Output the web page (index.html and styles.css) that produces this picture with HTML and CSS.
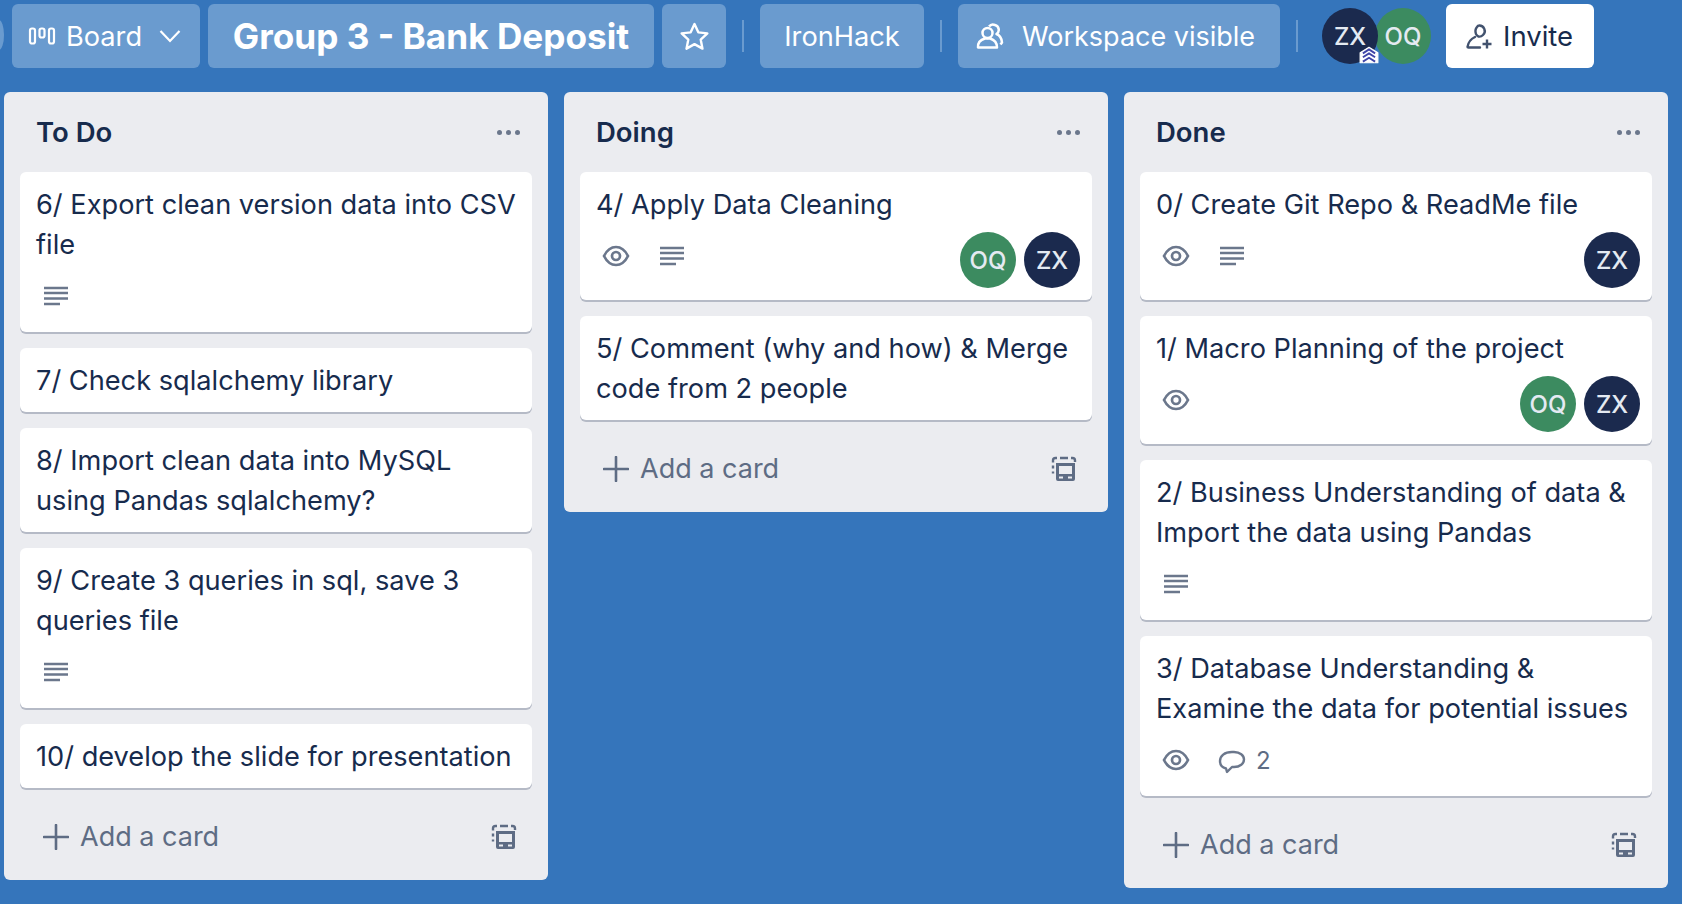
FILE: index.html
```html
<!DOCTYPE html>
<html lang="en">
<head>
<meta charset="utf-8">
<title>Group 3 - Bank Deposit</title>
<link rel="stylesheet" href="styles.css">
</head>
<body>
<svg class="sprites" width="0" height="0" aria-hidden="true">
  <defs>
    <symbol id="i-desc" viewBox="0 0 26 20"><path d="M1 2h24M1 7h24M1 12.500h24M1 18h16" fill="none" stroke="currentColor" stroke-width="2.400"/></symbol>
    <symbol id="i-eye" viewBox="0 0 28 22"><path d="M2 11C5 5 9 2 14 2s9 3 12 9c-3 6-7 9-12 9S5 17 2 11z" fill="none" stroke="currentColor" stroke-width="2.700"/><circle cx="14" cy="11" r="4" fill="none" stroke="currentColor" stroke-width="2.700"/></symbol>
    <symbol id="i-tpl" viewBox="0 0 26 26"><path d="M2 6.500V4.500Q2 2 4.500 2H6M9 2h8M20 2h1.500Q24 2 24 4.500V6M2 9.500v3M2 15.500v2" fill="none" stroke="currentColor" stroke-width="2.400"/><path d="M5 7h19v16q0 2-2 2H7q-2 0-2-2zM8 10v8h13v-8zM8 20.500v2h4v-2zM17 20.500v2h4v-2z" fill="currentColor" fill-rule="evenodd"/></symbol>
    <symbol id="i-plus" viewBox="0 0 26 26"><path d="M13 1v24M1 13h24" fill="none" stroke="currentColor" stroke-width="2.600" stroke-linecap="round"/></symbol>
  </defs>
</svg>
<header class="topbar">
  <span class="edge"></span>
  <div class="btn board-btn">
    <svg class="ico-board" viewBox="0 0 28 18"><rect x="2" y="1.500" width="5" height="15" rx="2" fill="none" stroke="#fff" stroke-width="2.200"/><rect x="11.500" y="1.500" width="5" height="9" rx="2" fill="none" stroke="#fff" stroke-width="2.200"/><rect x="21" y="1.500" width="5" height="15" rx="2" fill="none" stroke="#fff" stroke-width="2.200"/></svg>
    <span>Board</span>
    <svg class="ico-chev" viewBox="0 0 22 14"><path d="M1.500 2l9.500 10 9.500-10" fill="none" stroke="#fff" stroke-width="2.200"/></svg>
  </div>
  <h1 class="btn title">Group 3 - Bank Deposit</h1>
  <div class="btn star"><svg viewBox="0 0 26 26" width="31" height="31"><path d="M13 2.500l3.200 7 7.600.9-5.600 5.200 1.500 7.600L13 19.400l-6.700 3.800 1.500-7.600-5.600-5.200 7.600-.9z" fill="none" stroke="#fff" stroke-width="2" stroke-linejoin="round"/></svg></div>
  <span class="sep"></span>
  <div class="btn org">IronHack</div>
  <span class="sep"></span>
  <div class="btn vis">
    <svg viewBox="0 0 28 26" width="28" height="26"><circle cx="11.500" cy="10" r="5" fill="none" stroke="#fff" stroke-width="2.500"/><path d="M2 24.500q-.5-7 7-9h5q7 2 7 9z" fill="none" stroke="#fff" stroke-width="2.500" stroke-linejoin="round"/><path d="M13 3.500a5 5 0 0 1 6-1.500 5 5 0 0 1 1.500 9q5 2 5.500 8.500l-1.500 2" fill="none" stroke="#fff" stroke-width="2.500" stroke-linejoin="round"/></svg>
    <span>Workspace visible</span>
  </div>
  <span class="sep"></span>
  <div class="members">
    <span class="avatar top navy">ZX<svg class="chevrons" viewBox="0 0 18 16"><path d="M1 6L9 1l8 5v9H1z" fill="#fff" stroke="#fff" stroke-linejoin="round"/><path d="M3.500 6.500L9 3l5.500 3.500M3.500 10L9 6.500l5.500 3.500M3.500 14L9 10.500l5.500 3.500" fill="none" stroke="#3f45a8" stroke-width="1.700"/></svg></span>
    <span class="avatar top green">OQ</span>
  </div>
  <div class="invite">
    <svg viewBox="0 0 28 26" width="28" height="26"><path d="M14 2.500a5.500 5.500 0 0 1 4 9.500q-2 2-4.500 1.500-1.500-.5-2.500-2.500-1.500-4 1-7 1-1.500 2-1.500z" fill="none" stroke="#42526e" stroke-width="2.400"/><path d="M10 14Q3.500 17 2.500 24q0 .5 1 .5H15" fill="none" stroke="#42526e" stroke-width="2.400" stroke-linecap="round"/><path d="M22 16.500v9M17.500 21h9" fill="none" stroke="#42526e" stroke-width="2.400"/></svg>
    <span>Invite</span>
  </div>
</header>
<main class="lists">
  <section class="list">
    <div class="list-head"><h2>To Do</h2><span class="more"><i></i><i></i><i></i></span></div>
    <article class="card"><p>6/ Export clean version data into CSV file</p><div class="badges"><svg class="b-desc"><use href="#i-desc"/></svg></div></article>
    <article class="card"><p>7/ Check sqlalchemy library</p></article>
    <article class="card"><p>8/ Import clean data into MySQL using Pandas sqlalchemy?</p></article>
    <article class="card"><p>9/ Create 3 queries in sql, save 3 queries file</p><div class="badges"><svg class="b-desc"><use href="#i-desc"/></svg></div></article>
    <article class="card"><p>10/ develop the slide for presentation</p></article>
    <div class="add"><svg class="plus"><use href="#i-plus"/></svg><span>Add a card</span><svg class="tpl"><use href="#i-tpl"/></svg></div>
  </section>
  <section class="list">
    <div class="list-head"><h2>Doing</h2><span class="more"><i></i><i></i><i></i></span></div>
    <article class="card"><p>4/ Apply Data Cleaning</p><div class="badges with-members"><svg class="b-eye"><use href="#i-eye"/></svg><svg class="b-desc"><use href="#i-desc"/></svg><div class="card-members"><span class="avatar green">OQ</span><span class="avatar navy">ZX</span></div></div></article>
    <article class="card"><p>5/ Comment (why and how) &amp; Merge code from 2 people</p></article>
    <div class="add"><svg class="plus"><use href="#i-plus"/></svg><span>Add a card</span><svg class="tpl"><use href="#i-tpl"/></svg></div>
  </section>
  <section class="list">
    <div class="list-head"><h2>Done</h2><span class="more"><i></i><i></i><i></i></span></div>
    <article class="card"><p>0/ Create Git Repo &amp; ReadMe file</p><div class="badges with-members"><svg class="b-eye"><use href="#i-eye"/></svg><svg class="b-desc"><use href="#i-desc"/></svg><div class="card-members"><span class="avatar navy">ZX</span></div></div></article>
    <article class="card"><p>1/ Macro Planning of the project</p><div class="badges with-members"><svg class="b-eye"><use href="#i-eye"/></svg><div class="card-members"><span class="avatar green">OQ</span><span class="avatar navy">ZX</span></div></div></article>
    <article class="card"><p>2/ Business Understanding of data &amp; Import the data using Pandas</p><div class="badges"><svg class="b-desc"><use href="#i-desc"/></svg></div></article>
    <article class="card"><p>3/ Database Understanding &amp; Examine the data for potential issues</p><div class="badges"><svg class="b-eye"><use href="#i-eye"/></svg><svg class="b-comment" viewBox="0 0 28 26"><path d="M8 19.500C4 18.500 2 15.500 2 12c0-5 4.500-9 12-9h2c6 0 10 3.500 10 7.500S22 18 16 18h-2l-5 5z" fill="none" stroke="currentColor" stroke-width="2.400" stroke-linejoin="round"/></svg><span class="count">2</span></div></article>
    <div class="add"><svg class="plus"><use href="#i-plus"/></svg><span>Add a card</span><svg class="tpl"><use href="#i-tpl"/></svg></div>
  </section>
</main>
</body>
</html>
```
FILE: styles.css
```css
* { box-sizing: border-box; }
html, body { margin: 0; padding: 0; height: 100%; }
body {
  background: #3575bb;
  font-family: Inter, "Liberation Sans", sans-serif;
  color: #172b4d;
  overflow: hidden;
}
.sprites { display: block; height: 0; }
.topbar {
  height: 92px;
  padding: 4px 0 0 12px;
  display: flex;
  align-items: flex-start;
  color: #fff;
  position: relative;
}
.edge {
  position: absolute;
  left: -6px;
  top: 20px;
  width: 10px;
  height: 30px;
  border-radius: 50%;
  background: #6a9bcf;
}
.btn {
  height: 64px;
  background: #6a9bcf;
  border-radius: 6px;
  display: flex;
  align-items: center;
  justify-content: center;
  font-size: 27.200px;
  color: #fff;
  margin: 0 8px 0 0;
}
.board-btn { width: 188px; padding: 0 19px 0 16px; justify-content: flex-start; }
.ico-board { width: 28px; height: 18px; margin-right: 10px; }
.ico-chev { width: 22px; height: 14px; margin-left: auto; }
.title { width: 446px; font-size: 35.200px; font-weight: 700; }
.star { width: 64px; }
.sep { width: 2px; height: 32px; margin: 16px 16px 0 8px; background: #6a9bcf; }
.org { width: 164px; margin-right: 8px; }
.org + .sep { margin-left: 8px; }
.vis { width: 322px; gap: 18px; margin-right: 8px; justify-content: flex-start; padding-left: 18px; font-size: 27px; }
.vis + .sep { margin-left: 8px; }
.members { display: flex; margin: 4px 15px 0 8px; }
.avatar {
  width: 56px;
  height: 56px;
  border-radius: 50%;
  display: flex;
  align-items: center;
  justify-content: center;
  color: #e4eaf2;
  font-size: 24px;
  font-weight: 500;
  flex: none;
}
.navy { background: #1b2a4e; }
.green { background: #3c8b60; }
.top { position: relative; }
.top.navy { z-index: 1; }
.top + .top { margin-left: -3px; }
.chevrons { position: absolute; right: -1px; bottom: 0; width: 20px; height: 18px; }
.invite {
  width: 148px;
  height: 64px;
  padding-left: 19px;
  background: #fff;
  border-radius: 6px;
  color: #172b4d;
  font-size: 27.500px;
  display: flex;
  align-items: center;
  gap: 10px;
}
.lists {
  display: flex;
  align-items: flex-start;
  gap: 16px;
  padding-left: 4px;
}
.list {
  width: 544px;
  flex: none;
  background: #ebecf0;
  border-radius: 6px;
  padding: 0 16px;
}
.list-head {
  height: 80px;
  display: flex;
  align-items: center;
  justify-content: space-between;
  padding: 0 0 0 16px;
}
.list-head h2 { margin: 0; font-size: 27.500px; font-weight: 600; color: #172b4d; }
.more { display: flex; gap: 4px; margin-right: 12px; }
.more i { width: 5px; height: 5px; border-radius: 50%; background: #6b778c; }
.card {
  background: #fff;
  border-radius: 6px;
  box-shadow: 0 2px 0 #b5bac6;
  margin-bottom: 16px;
  padding: 13px 14px 11px 16px;
}
.card p { margin: 0; font-size: 27.200px; line-height: 40px; color: #172b4d; }
.badges {
  display: flex;
  align-items: flex-start;
  height: 56px;
  padding: 20px 0 0 7px;
  color: #6b778c;
  gap: 28px;
}
.with-members { position: relative; height: 64px; }
.card-members {
  position: absolute;
  right: -2px;
  top: 7px;
  display: flex;
  gap: 8px;
}
.b-desc { width: 26px; height: 20px; margin-top: 1px; }
.b-eye { width: 28px; height: 22px; margin: 0 1px 0 -1px; }
.b-comment { width: 28px; height: 26px; margin-right: -18px; margin-left: -1px; }
.count { font-size: 24px; line-height: 24px; color: #5e6c84; }
.add {
  height: 76px;
  display: flex;
  align-items: center;
  color: #5e6c84;
  font-size: 27px;
  padding: 0 15px 11px 23px;
}
.plus { width: 26px; height: 26px; margin-right: 11px; }
.tpl { width: 26px; height: 26px; margin-left: auto; }
```
